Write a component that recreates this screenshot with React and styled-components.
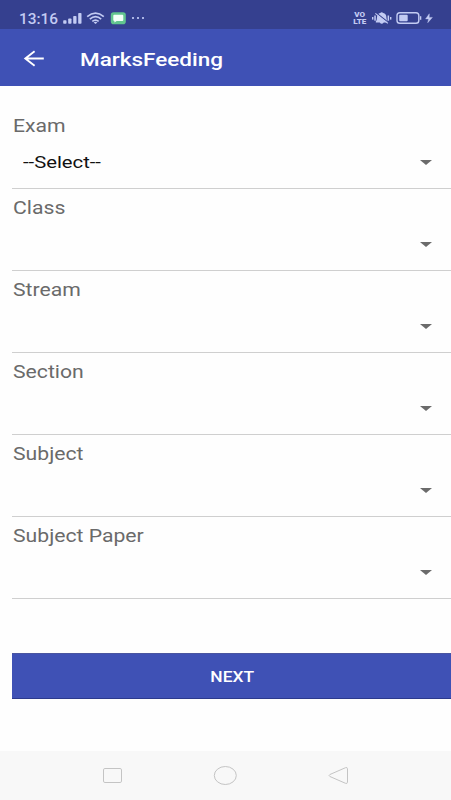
import React from "react";
import styled, { createGlobalStyle } from "styled-components";

const fields = [
    { label: "Exam", value: "--Select--" },
    { label: "Class", value: "" },
    { label: "Stream", value: "" },
    { label: "Section", value: "" },
    { label: "Subject", value: "" },
    { label: "Subject Paper", value: "" },
];

const App = () => {
    return (
        <Screen>
            <GlobalStyle />
            <StatusBar>
                <StatusGroup>
                    <Clock $stretch={1.1}>13:16</Clock>
                    <svg width="76" height="16" viewBox="0 0 76 16">
                        <g fill="#c3cbf3">
                            <rect x="0.2" y="10.2" width="3.3" height="3.6" rx="0.8" />
                            <rect x="5.2" y="8.4" width="3.3" height="5.4" rx="0.8" />
                            <rect x="10.2" y="6" width="3.3" height="7.8" rx="0.8" />
                            <rect x="15.2" y="3" width="3.3" height="10.8" rx="0.8" />
                        </g>
                        <g fill="none" stroke="#c3cbf3" strokeWidth="1.7">
                            <path d="M24.2 6.6Q32.5 -0.4 40.8 6.6" />
                            <path d="M26.8 9.1Q32.5 4.3 38.2 9.1" />
                            <path d="M29.3 11.4Q32.5 8.8 35.7 11.4" />
                        </g>
                        <path d="M30.6 12.4Q32.5 11.1 34.4 12.4L32.5 14.1Z" fill="#c3cbf3" />
                        <rect x="47.8" y="2.2" width="15" height="12" rx="2.8" fill="#62c58f" />
                        <path d="M51.3 4.7h8q1 0 1 1v4.2q0 1-1 1h-5.6l-2.3 1.6v-1.6q-1.1 0-1.1-1V5.7q0-1 1-1z" fill="#f2fff8" />
                    </svg>
                    <Dots>
                        <i />
                        <i />
                        <i />
                    </Dots>
                </StatusGroup>
                <StatusGroup>
                    <Volte>
                        <span>VO</span>
                        <span>LTE</span>
                    </Volte>
                    <svg width="62" height="16" viewBox="0 0 62 16">
                        <g fill="#c3cbf3">
                            <path d="M3.8 11.6Q5 10.4 5 7.5Q5 3.6 8.2 3Q9.7 1.6 11.2 3Q14.4 3.6 14.4 7.5Q14.4 10.4 16 11.6V12.4H11.8Q9.7 15.2 7.7 12.4H3.8Z" />
                            <rect x="0" y="7" width="1.4" height="2.6" />
                            <rect x="2.3" y="5.5" width="1.5" height="5.2" />
                            <rect x="15.6" y="5.5" width="1.5" height="5.2" />
                            <rect x="18" y="7" width="1.4" height="2.6" />
                        </g>
                        <path d="M4.6 3.2L17 12.9" stroke="#35408f" strokeWidth="1.2" />
                        <path d="M3.4 3.4L15.8 13.4" stroke="#c3cbf3" strokeWidth="1.2" />
                        <rect x="25" y="2.7" width="21.8" height="10.6" rx="2.8" fill="none" stroke="#c3cbf3" strokeWidth="1.4" />
                        <rect x="27.2" y="4.8" width="8.5" height="6.4" rx="1" fill="#c3cbf3" />
                        <path d="M48.6 6.2v3.6" stroke="#c3cbf3" strokeWidth="1.4" />
                        <path d="M57.3 3.8L53.6 8.9H56.6L55.7 12.8L60.4 7.4H57.2Z" fill="#c3cbf3" stroke="#c3cbf3" strokeWidth="0.4" />
                    </svg>
                </StatusGroup>
            </StatusBar>
            <Toolbar>
                <BackButton aria-label="Back">
                    <svg width="22" height="18" viewBox="0 0 22 18" fill="none" stroke="#fff" strokeWidth="1.9">
                        <path d="M11.6 1.2L2.3 8.5l9.3 7.3M2.5 8.5H20.8" />
                    </svg>
                </BackButton>
                <Title $stretch={1.285}>MarksFeeding</Title>
            </Toolbar>
            <Form>
                {fields.map(({ label, value }) => (
                    <Field key={label}>
                        <Label $stretch={1.21}>{label}</Label>
                        <Select>
                            <Value $stretch={1.19}>{value}</Value>
                            <svg width="12" height="5" viewBox="0 0 12 5">
                                <path d="M0 0H12L6 5Z" fill="#6b6b6b" />
                            </svg>
                        </Select>
                    </Field>
                ))}
                <NextButton>
                    <NextText>NEXT</NextText>
                </NextButton>
            </Form>
            <NavBar>
                <svg width="20" height="18" viewBox="0 0 20 18">
                    <rect x="1.5" y="1.5" width="18" height="14" rx="1.4" />
                </svg>
                <svg width="24" height="20" viewBox="0 0 24 20">
                    <ellipse cx="12.3" cy="9.5" rx="11" ry="9" />
                </svg>
                <svg width="20" height="18" viewBox="0 0 20 18">
                    <path d="M17.5 0.7Q19.5 0.1 19.5 1.7V15.3Q19.5 16.9 17.5 16.3L1.9 9.5Q0.3 8.5 1.9 7.5Z" />
                </svg>
            </NavBar>
        </Screen>
    )
}

const GlobalStyle = createGlobalStyle`
    * {
        box-sizing: border-box;
    }
    body {
        margin: 0;
        background-color: #fff;
        font-family: Roboto, "Liberation Sans", sans-serif;
    }
    svg {
        display: block;
        flex-shrink: 0;
    }
    `
const Screen = styled.div`
    display: flex;
    flex-direction: column;
    width: 451px;
    height: 800px;
    overflow: hidden;
    background-color: #fefefe;
    `
const StatusBar = styled.div`
    display: flex;
    justify-content: space-between;
    height: 29px;
    padding: 8px 17px 0 19px;
    background-color: #35408f;
    color: #c3cbf3;
    `
const StatusGroup = styled.div`
    display: flex;
    align-items: center;
    height: 20px;
    `
/* wide letterforms: every text is stretched from its left edge */
const Wide = styled.span`
    display: block;
    white-space: nowrap;
    transform: scaleX(${({ $stretch = 1.2 }) => $stretch});
    transform-origin: left center;
    `
const Clock = styled(Wide)`
    width: 44px;
    padding-top: 1px;
    font-size: 14px;
    font-weight: 500;
    line-height: 20px;
    `
const Dots = styled.div`
    display: flex;
    gap: 3px;
    margin-left: -7px;

    i {
        width: 2px;
        height: 2px;
        background-color: #a9b3e4;
    }
    `
const Volte = styled.div`
    display: flex;
    flex-direction: column;
    align-items: center;
    width: 14px;
    margin: 1px 5px 0 0;
    font-size: 7px;
    font-weight: 900;
    line-height: 7px;

    span {
        transform: scaleX(1.15);
    }
    `
const Toolbar = styled.header`
    display: flex;
    align-items: center;
    height: 57px;
    padding: 2px 0 0 23px;
    background-color: #3f51b5;
    `
const BackButton = styled.button`
    width: 57px;
    padding: 0;
    border: 0;
    background: none;
    `
const Title = styled(Wide).attrs({ as: "h1" })`
    margin: 0;
    padding-top: 2px;
    color: #fff;
    font-size: 17.5px;
    font-weight: 500;
    `
const Form = styled.main`
    display: flex;
    flex: 1;
    flex-direction: column;
    padding: 21px 0 0 12px;
    `
const Field = styled.div`
    height: 82px;
    border-bottom: 1px solid #cfcfcf;
    `
const Label = styled(Wide)`
    height: 37px;
    margin-left: 0.5px;
    color: #6a6a6a;
    font-size: 17.5px;
    line-height: 38px;
    `
const Select = styled.div`
    display: flex;
    align-items: center;
    justify-content: space-between;
    height: 36px;
    padding: 0 19px 0 10.5px;
    `
const Value = styled(Wide)`
    color: #111;
    font-size: 17px;
    `
const NextButton = styled.button`
    display: flex;
    align-items: center;
    justify-content: center;
    height: 46px;
    margin-top: 54px;
    padding: 2px 0 0 1px;
    border: 0;
    border-top: 1px solid #4a55a0;
    border-bottom: 1px solid #2c3a8c;
    background-color: #3f51b5;
    font-family: inherit;
    `
const NextText = styled(Wide)`
    color: #fff;
    font-size: 14.5px;
    font-weight: 500;
    transform-origin: center;
    `
const NavBar = styled.nav`
    display: flex;
    align-items: center;
    justify-content: space-between;
    height: 49px;
    padding: 0 103px 0 102px;
    background-color: #f8f8f8;

    svg {
        fill: none;
        stroke: #c4c4c4;
        stroke-width: 1;
    }
    `
export default App;
